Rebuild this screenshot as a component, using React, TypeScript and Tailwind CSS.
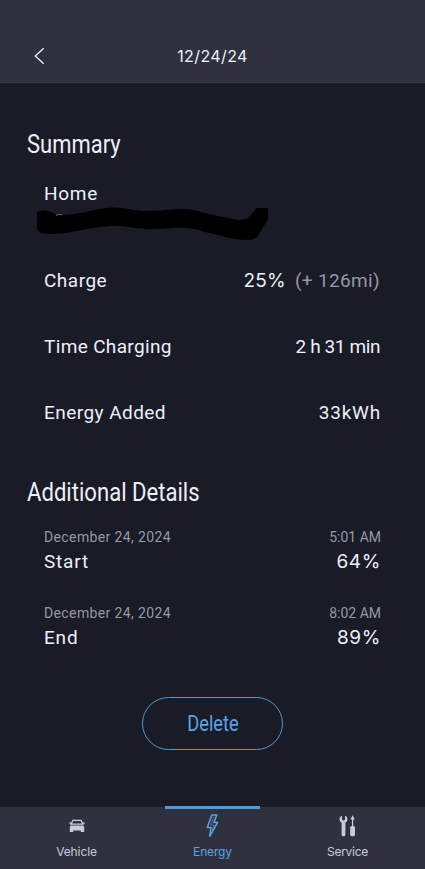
import React from 'react';

const BackIcon = () => (
  <svg className="h-[18px] w-[11px]" viewBox="0 0 11 18" fill="none" stroke="currentColor" strokeWidth={1.3}>
    <path d="M9.7 1.2L1.3 9l8.4 7.8" />
  </svg>
);

const VehicleIcon = () => (
  <svg className="h-[26px] w-6" viewBox="0 0 24 26" fill="currentColor">
    <path d="M8 7.3h8l2 3.9H6z" fill="none" stroke="currentColor" strokeWidth={1.3} />
    <path d="M4.3 9.4h2v1.4h-2zM17.7 9.4h2v1.4h-2z" />
    <path d="M5.6 12.6h12.8l.8 1.4v5h-3.4v-1.4H8.2V19H4.8v-5z" />
  </svg>
);

const EnergyIcon = () => (
  <svg className="h-[26px] w-6" viewBox="0 0 24 26" fill="none" stroke="currentColor" strokeWidth={1.5} strokeLinejoin="round">
    <path d="M10.8 2h5l-2.9 7.4h3.7L8.7 23.4l1.3-8.9H6.3z" />
    <path d="M12.9 3.6l-3.1 8.4h3.1l-1.6 5" strokeWidth={0.6} />
  </svg>
);

const ServiceIcon = () => (
  <svg className="h-[26px] w-6" viewBox="0 0 24 26" fill="currentColor">
    <path d="M6 2.8v3.8l1.5 1.1L9 6.6V2.8c1.7.7 2.5 1.9 2.5 3.5 0 1.5-.8 2.7-2.1 3.4v11.8c0 1.1-.7 1.8-1.9 1.8s-1.9-.7-1.9-1.8V9.7C4.3 9 3.5 7.8 3.5 6.3c0-1.6.8-2.8 2.5-3.5z" />
    <path d="M16.6 2.2l2.2 4.2h-1.6v6.8h.7c.7 0 1.1.4 1.1 1v7.4c0 1.1-.7 1.7-1.7 1.7h-1.4c-1 0-1.7-.6-1.7-1.7v-7.4c0-.6.4-1 1.1-1h.7V6.4h-1.6z" />
  </svg>
);

const Details = ({ date, time, label, value }: { date: string; time: string; label: string; value: string }) => (
  <div className="h-[76px]">
    <div className="flex h-5 items-center justify-between text-[14px] text-[#9697a5]">
      <span className="tracking-[0.38px]">{date}</span>
      <span className="-mr-px">{time}</span>
    </div>
    <div className="flex h-[30px] items-center justify-between text-[19px]">
      <span className="tracking-[0.8px]">{label}</span>
      <span className="-mr-px font-['Inter',sans-serif] tracking-[0.6px]">{value}</span>
    </div>
  </div>
);

const App: React.FC = () => {
  return (
    <div className="flex h-[869px] w-[425px] flex-col overflow-hidden bg-[#191b26] font-['Roboto',sans-serif] text-[#eeeff8]">
      <header className="grid h-[83px] shrink-0 grid-cols-[80px_1fr_80px] items-center border-b border-[#343746] bg-[#2f313f] pt-[30px]">
        <button className="ml-[34px] w-fit">
          <BackIcon />
        </button>
        <h1 className="text-center font-['Inter',sans-serif] text-[16px] tracking-[0.4px]">12/24/24</h1>
      </header>

      <main className="flex-1 pt-[43px]">
        <section>
          <h2 className="ml-[27px] h-9 w-fit origin-left scale-x-[0.845] text-[26px] leading-9 whitespace-nowrap">Summary</h2>
          <div className="ml-[44px] w-[336px] text-[19px]">
            <div className="relative h-[87px] border-b border-[#1b1d28] pt-[18px]">
              <p className="leading-[28px] tracking-[0.7px]">Home</p>
              <svg className="absolute top-[44px] -left-[8px] h-[36px] w-[234px]" viewBox="0 0 234 36">
                <path d="M1 6Q8 3 15 6L21 9Q38 9 54 5Q77-1 92 3C112 7 126 4 144 3C164 3 170 9 188 11L202 14L211 13L221 2H232V13L222 30Q218 34 212 34C196 34 184 29 169 26C153 20 139 22 121 23C101 24 88 19 75 20C57 21 48 24 35 26Q12 30 4 26Q1 24 1 21Z" fill="#000000" />
                <path d="M20 9.2Q23 8 26 8.8" stroke="#777780" strokeWidth={0.8} fill="none" />
              </svg>
            </div>
            <div className="flex h-[66px] items-center justify-between border-b border-[#171923]">
              <span className="tracking-[0.5px]">Charge</span>
              <span className="flex items-center gap-[9px]">
                <span className="font-['Inter',sans-serif] tracking-[0.2px]">25%</span>
                <span className="tracking-[0.35px] text-[#9697a5]">(+ 126mi)</span>
              </span>
            </div>
            <div className="flex h-[66px] items-center justify-between border-b border-[#171923]">
              <span className="tracking-[0.35px]">Time Charging</span>
              <span className="tracking-[-0.4px]">2 h 31 min</span>
            </div>
            <div className="flex h-[64px] items-center justify-between">
              <span className="tracking-[0.45px]">Energy Added</span>
              <span className="-mr-px tracking-[0.8px]">33kWh</span>
            </div>
          </div>
        </section>

        <section className="pt-[29px]">
          <h2 className="ml-[27px] h-9 w-fit origin-left scale-x-[0.85] text-[26px] leading-9 whitespace-nowrap">Additional Details</h2>
          <div className="mt-[17px] ml-[44px] w-[336px]">
            <Details date="December 24, 2024" time="5:01 AM" label="Start" value="64%" />
            <Details date="December 24, 2024" time="8:02 AM" label="End" value="89%" />
          </div>
        </section>

        <button className="mx-auto mt-[18px] flex h-[53px] w-[141px] items-center justify-center rounded-full border border-[#5495d0] text-[22px] text-[#5ba3e2]">
          <span className="scale-x-[0.83]">Delete</span>
        </button>
      </main>

      <nav className="grid h-[62px] shrink-0 grid-cols-[1fr_95px_1fr] bg-[#2f313f] font-['Inter',sans-serif] text-[12px] text-[#c9cbdd]">
        <div className="flex w-[153px] flex-col items-center pt-[6px]">
          <VehicleIcon />
          <span className="mt-[4px] tracking-[-0.1px]">Vehicle</span>
        </div>
        <div className="-mt-px flex flex-col items-center border-t-3 border-[#4f9adc] pt-[4px] text-[#5ba3e2]">
          <EnergyIcon />
          <span className="mt-[4px] tracking-[-0.15px]">Energy</span>
        </div>
        <div className="ml-[11px] flex w-[153px] flex-col items-center pt-[6px]">
          <ServiceIcon />
          <span className="mt-[4px] tracking-[-0.3px]">Service</span>
        </div>
      </nav>
    </div>
  );
};

export default App;
